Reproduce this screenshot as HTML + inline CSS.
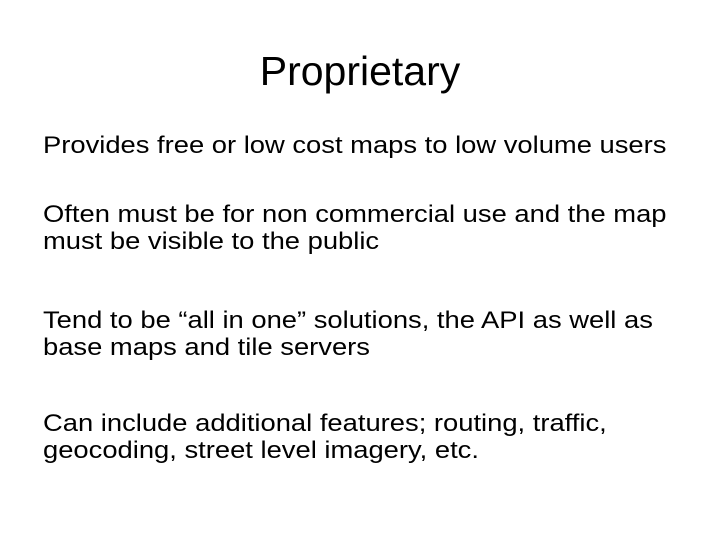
<!DOCTYPE html>
<html><head><meta charset="utf-8"><style>
html,body{margin:0;padding:0;background:#fff;}
body{width:720px;height:540px;position:relative;overflow:hidden;font-family:"Liberation Sans",sans-serif;color:#000;}
.t{position:absolute;left:0;width:720px;top:48px;text-align:center;font-size:41px;line-height:46px;}
.p{position:absolute;left:43px;font-size:24px;line-height:27px;white-space:nowrap;transform:scaleX(1.14);transform-origin:0 0;}
</style></head><body>
<div class="t">Proprietary</div>
<div class="p" style="top:132px">Provides free or low cost maps to low volume users</div>
<div class="p" style="top:201px">Often must be for non commercial use and the map<br>must be visible to the public</div>
<div class="p" style="top:307px">Tend to be “all in one” solutions, the API as well as<br>base maps and tile servers</div>
<div class="p" style="top:410px">Can include additional features; routing, traffic,<br>geocoding, street level imagery, etc.</div>
</body></html>
